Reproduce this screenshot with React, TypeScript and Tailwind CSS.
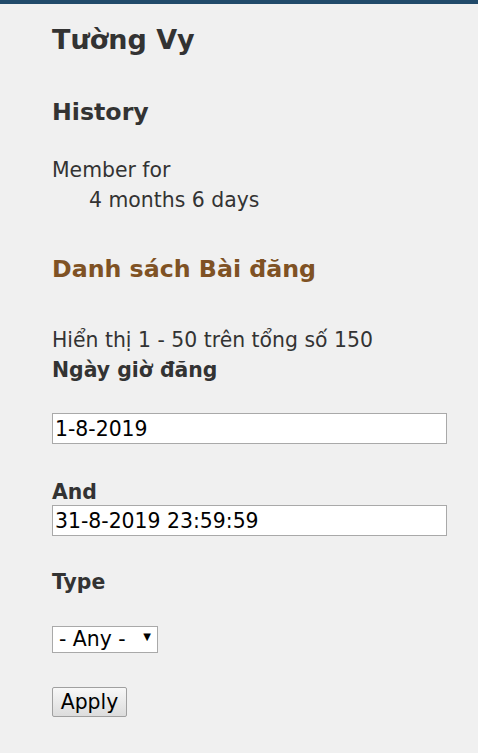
export default function App() {
  return (
    <div className="min-h-[753px] bg-[#f0f0f0] text-[#333333] font-['DejaVu_Sans',Verdana,sans-serif]">
      <div className="h-[4px] bg-[#214a6a]" />
      <div className="pl-[52px] pr-[31px]">
        <h1 className="mt-[20px] text-[27px] leading-[32px] font-bold">Tường Vy</h1>

        <h2 className="mt-[42px] text-[23.7px] leading-[28px] font-bold">History</h2>
        <dl className="mt-[29px] text-[20.4px] leading-[30px]">
          <dt>Member for</dt>
          <dd className="pl-[37px]">4 months 6 days</dd>
        </dl>

        <h2 className="mt-[40px] text-[23.7px] leading-[28px] font-bold text-[#7f5224]">
          Danh sách Bài đăng
        </h2>

        <div className="mt-[42px] text-[20.4px] leading-[30px]">
          Hiển thị 1 - 50 trên tổng số 150
        </div>

        <form className="flex flex-col text-[20.4px] leading-[30px]" onSubmit={(e) => e.preventDefault()}>
          <label className="font-bold">Ngày giờ đăng</label>
          <input
            type="text"
            defaultValue="1-8-2019"
            className="mt-[28px] h-[31px] w-full border border-[#a9a9a9] bg-white px-[2px] text-[20.4px] text-black outline-none"
          />

          <label className="mt-[33px] font-bold">And</label>
          <input
            type="text"
            defaultValue="31-8-2019 23:59:59"
            className="-mt-[2px] h-[31px] w-full border border-[#a9a9a9] bg-white px-[2px] text-[20.4px] text-black outline-none"
          />

          <label className="mt-[31px] font-bold">Type</label>
          <div className="relative mt-[27px] w-[106px]">
            <select className="h-[27px] w-full appearance-none rounded-none border border-[#a9a9a9] bg-white pl-[6px] text-[20.4px] leading-[25px] text-black outline-none">
              <option>- Any -</option>
              <option>Bài viết</option>
            </select>
            <span className="pointer-events-none absolute right-[7px] top-[8px] text-[10px] leading-none text-black">▼</span>
          </div>

          <div className="mt-[33px]">
            <button
              type="submit"
              className="h-[30px] w-[75px] rounded-[2px] border border-[#a0a0a0] bg-gradient-to-b from-[#f8f8f8] to-[#dcdcdc] text-[20.4px] leading-[28px] text-black"
            >
              Apply
            </button>
          </div>
        </form>
      </div>
    </div>
  );
}
